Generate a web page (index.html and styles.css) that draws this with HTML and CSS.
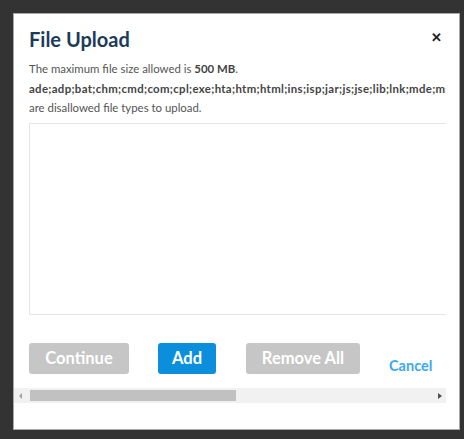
FILE: index.html
```html
<!DOCTYPE html>
<html lang="en">
<head>
<meta charset="utf-8">
<title>File Upload</title>
<link rel="stylesheet" href="styles.css">
</head>
<body>
<div class="frame">
  <div class="viewport">
    <div class="dialog">
      <div class="header">
        <h1 class="title">File Upload</h1>
        <span class="close">&#x2715;</span>
      </div>
      <p class="info">The maximum file size allowed is <b>500 MB</b>.</p>
      <p class="info types">ade;adp;bat;chm;cmd;com;cpl;exe;hta;htm;html;ins;isp;jar;js;jse;lib;lnk;mde;msc;msp;mst;pif;scr;sct;shb;sys;vb;vbe;vbs;vxd;wsc;wsf;wsh</p>
      <p class="info">are disallowed file types to upload.</p>
      <div class="dropzone"></div>
      <div class="actions">
        <button class="btn btn-muted">Continue</button>
        <button class="btn btn-primary">Add</button>
        <button class="btn btn-muted">Remove All</button>
        <a class="link">Cancel</a>
      </div>
    </div>
  </div>
  <div class="hscroll">
    <span class="arrow arrow-left"></span>
    <div class="track"><div class="thumb"></div></div>
    <span class="arrow arrow-right"></span>
  </div>
</div>
</body>
</html>
```
FILE: styles.css
```css
html, body {
  margin: 0;
  padding: 0;
}
body {
  background: #333333;
  width: 464px;
  height: 439px;
  overflow: hidden;
  font-family: Lato, "Open Sans", sans-serif;
}
.frame {
  margin: 13px 4px 0 13px;
  width: 445px;
  height: 415px;
  background: #ffffff;
  border: 1px solid #a8a8a8;
}
.viewport {
  width: 432px;
  height: 374px;
  overflow: hidden;
}
.dialog {
  padding: 0 0 0 15px;
}
.header {
  display: flex;
  align-items: center;
  justify-content: space-between;
  height: 45px;
  padding-right: 4px;
}
.title {
  margin: 0;
  font-size: 20px;
  font-weight: 700;
  color: #1c3b5c;
  padding-top: 4px;
}
.close {
  font-size: 13px;
  font-weight: 900;
  color: #222;
  padding-top: 1px;
}
.info {
  margin: 0;
  font-size: 11.4px;
  line-height: 19.5px;
  color: #555;
  white-space: nowrap;
}
.info b {
  color: #444;
}
.types {
  font-weight: 700;
  color: #444;
  letter-spacing: 0.33px;
}
.dropzone {
  margin-top: 5px;
  width: 800px;
  height: 190px;
  border: 1px solid #e6e6e6;
}
.actions {
  display: flex;
  align-items: center;
  margin-top: 28px;
}
.btn {
  height: 31px;
  border: none;
  border-radius: 3px;
  font-family: inherit;
  font-size: 16.5px;
  font-weight: 700;
  color: #fff;
  padding: 0 10px;
}
.btn-muted {
  background: #c6c6c6;
}
.btn-primary {
  background: #0b8fdc;
}
.actions .btn:nth-child(1) { width: 100px; }
.actions .btn:nth-child(2) { width: 58px; margin-left: 29px; }
.actions .btn:nth-child(3) { width: 114px; margin-left: 30px; }
.link {
  margin-left: 29px;
  margin-top: 14px;
  font-size: 14.5px;
  font-weight: 700;
  color: #3aa9f0;
}
.hscroll {
  display: flex;
  align-items: center;
  width: 432px;
  height: 15px;
  background: #f1f1f1;
}
.arrow {
  width: 15px;
  height: 15px;
  position: relative;
}
.arrow::before {
  content: "";
  position: absolute;
  top: 5px;
  border-top: 3px solid transparent;
  border-bottom: 3px solid transparent;
}
.arrow-left::before {
  left: 5px;
  border-right: 3px solid #a3a3a3;
}
.arrow-right::before {
  left: 7px;
  border-left: 4px solid #505050;
}
.track {
  flex: 1;
  height: 15px;
  display: flex;
  align-items: center;
}
.thumb {
  width: 206px;
  height: 11px;
  background: #c1c1c1;
  margin-left: 1px;
}
```
